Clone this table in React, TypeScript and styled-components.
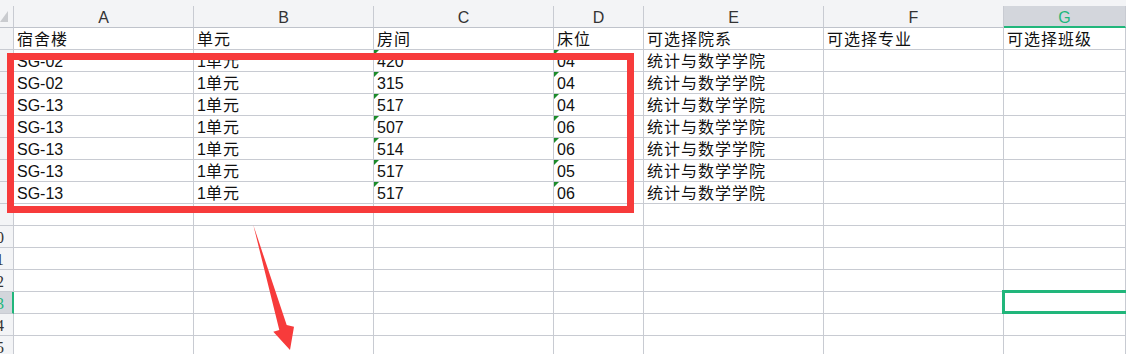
import styled, { createGlobalStyle, css } from "styled-components";

const GlobalStyle = createGlobalStyle`
    html,
    body {
        margin: 0;
        padding: 0;
        background: #ffffff;
        overflow: hidden;
    }

    body {
        font-family: "Liberation Sans", "Noto Sans CJK SC", sans-serif;
        color: #111111;
    }
`;

const GRID = "#c8cbd2";
const ACCENT = "#21b67b";
const MARK = "#f73b3b";
const COLUMNS = "14px 180px 180px 180px 90px 180px 180px 1fr";

const Sheet = styled.div`
    position: relative;
    width: 1126px;
    height: 354px;
    overflow: hidden;
`;

const TopStrip = styled.div`
    height: 6px;
    background: #f3f4f6;
`;

const Row = styled.div`
    display: grid;
    grid-template-columns: ${COLUMNS};
    height: 22px;
`;

const HeadCell = styled.div<{ $active?: boolean }>`
    position: relative;
    box-sizing: border-box;
    height: 22px;
    padding-top: 3px;
    line-height: 18px;
    font-size: 16px;
    text-align: center;
    color: #333333;
    background: #f3f4f6;
    border-right: 1px solid ${GRID};
    border-bottom: 1px solid #bfc3cb;

    ${({ $active }) =>
        $active &&
        css`
            background: #d3d6dc;
            color: ${ACCENT};
            border-bottom: 2px solid ${ACCENT};
        `}
`;

const Corner = styled(HeadCell)`
    &::after {
        content: "";
        position: absolute;
        left: 0;
        top: 5px;
        width: 8px;
        height: 11px;
        background: #c9cbcf;
        clip-path: polygon(100% 0, 100% 100%, 0 100%);
    }
`;

const RowHead = styled.div<{ $active?: boolean }>`
    box-sizing: border-box;
    height: 22px;
    overflow: hidden;
    background: #f3f4f6;
    border-right: 1px solid ${GRID};
    border-bottom: 1px solid ${GRID};
    color: #333333;

    ${({ $active }) =>
        $active &&
        css`
            background: #d3d6dc;
            color: ${ACCENT};
            border-right: 2px solid ${ACCENT};
        `}
`;

// row numbers sit centred in a column that is scrolled mostly out of view
const RowLabel = styled.span`
    display: block;
    width: 36px;
    margin-left: -22px;
    padding-top: 3px;
    line-height: 18px;
    font-family: "Liberation Serif", serif;
    font-size: 16px;
    text-align: center;
`;

const Cell = styled.div<{ $flag?: boolean }>`
    position: relative;
    box-sizing: border-box;
    height: 22px;
    padding: 3px 0 0 3px;
    line-height: 18px;
    font-size: 16px;
    white-space: nowrap;
    border-right: 1px solid ${GRID};
    border-bottom: 1px solid ${GRID};

    ${({ $flag }) =>
        $flag &&
        css`
            &::before {
                content: "";
                position: absolute;
                left: 0;
                top: 0;
                width: 5px;
                height: 5px;
                background: #1c8b2a;
                clip-path: polygon(0 0, 100% 0, 0 100%);
            }
        `}
`;

// Chinese runs are set a little looser than the latin text
const Han = styled.span`
    letter-spacing: 1px;
`;

const Selection = styled.div`
    position: absolute;
    left: -2px;
    top: -2px;
    right: -10px;
    bottom: -1px;
    border: 3px solid ${ACCENT};
`;

const Highlight = styled.div`
    position: absolute;
    left: 7px;
    top: 53px;
    width: 627px;
    height: 160px;
    box-sizing: border-box;
    border: 7px solid ${MARK};
    pointer-events: none;
`;

const Arrow = styled.svg`
    position: absolute;
    left: 0;
    top: 0;
    pointer-events: none;
`;

const letters = ["A", "B", "C", "D", "E", "F", "G"];

const titles = ["宿舍楼", "单元", "房间", "床位", "可选择院系", "可选择专业", "可选择班级"];

const beds = [
    ["SG-02", "1单元", "420", "04"],
    ["SG-02", "1单元", "315", "04"],
    ["SG-13", "1单元", "517", "04"],
    ["SG-13", "1单元", "507", "06"],
    ["SG-13", "1单元", "514", "06"],
    ["SG-13", "1单元", "517", "05"],
    ["SG-13", "1单元", "517", "06"]
];

const college = "统计与数学学院";
const activeRow = 13;
const totalRows = 15;

function CellText({ value }: { value: string }) {
    const parts = value.split(/([\u4e00-\u9fff]+)/).filter(Boolean);
    return (
        <>
            {parts.map((p, i) =>
                /[\u4e00-\u9fff]/.test(p) ? <Han key={i}>{p}</Han> : <span key={i}>{p}</span>
            )}
        </>
    );
}

export default function App() {
    const rows: string[][] = [titles];
    beds.forEach((b) => rows.push([...b, college, "", ""]));
    while (rows.length < totalRows) rows.push(["", "", "", "", "", "", ""]);

    return (
        <>
            <GlobalStyle />
            <Sheet>
                <TopStrip />
                <Row>
                    <Corner />
                    {letters.map((l) => (
                        <HeadCell key={l} $active={l === "G"}>
                            {l}
                        </HeadCell>
                    ))}
                </Row>
                {rows.map((cells, i) => {
                    const n = i + 1;
                    const isData = n >= 2 && n <= beds.length + 1;
                    return (
                        <Row key={n}>
                            <RowHead $active={n === activeRow}>
                                <RowLabel>{n}</RowLabel>
                            </RowHead>
                            {cells.map((value, c) => (
                                <Cell key={c} $flag={isData && (c === 2 || c === 3)}>
                                    <CellText value={value} />
                                    {n === activeRow && c === 6 && <Selection />}
                                </Cell>
                            ))}
                        </Row>
                    );
                })}
                <Highlight />
                <Arrow width="1126" height="354" viewBox="0 0 1126 354">
                    <polygon
                        points="253.3,225 286.7,325 294,326.7 290,350 273.3,331.7 279.3,330"
                        fill={MARK}
                    />
                </Arrow>
            </Sheet>
        </>
    );
}
